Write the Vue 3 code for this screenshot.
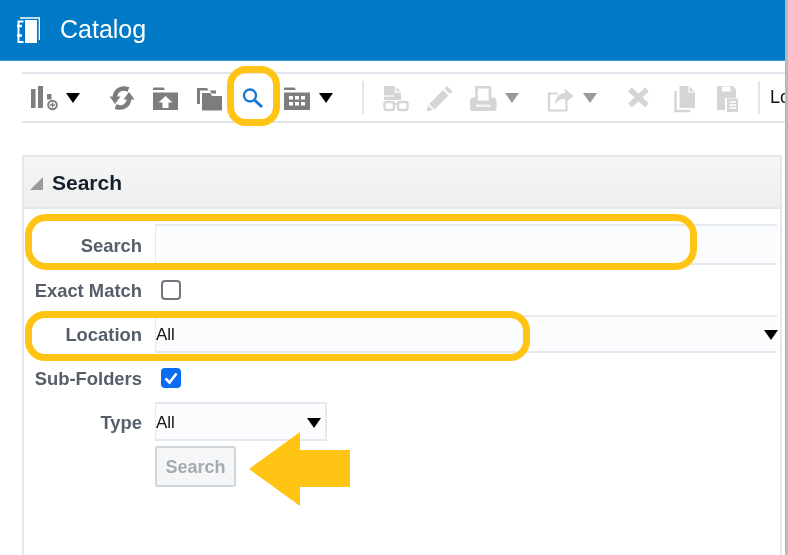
<script setup>
const tools = [
  { id: 'bars', x: 43, w: 30 }, { id: 'caret', x: 72.5, w: 14 },
  { id: 'refresh', x: 122, w: 30 }, { id: 'folderUp', x: 165, w: 30 },
  { id: 'folders', x: 209, w: 30 }, { id: 'search', x: 252, w: 30 },
  { id: 'folderGrid', x: 297, w: 30 }, { id: 'caret', x: 326, w: 14 },
  { id: 'sep', x: 363, w: 2 }, { id: 'docGlasses', x: 396, w: 30, off: true },
  { id: 'pencil', x: 440, w: 30, off: true }, { id: 'printer', x: 483, w: 30, off: true },
  { id: 'caret', x: 512, w: 14, off: true }, { id: 'share', x: 561, w: 30, off: true },
  { id: 'caret', x: 590, w: 14, off: true }, { id: 'close', x: 638, w: 30, off: true },
  { id: 'copy', x: 684, w: 30, off: true }, { id: 'paste', x: 727, w: 30, off: true },
  { id: 'sep', x: 759, w: 2 }
]
const startX = 22
const placed = tools.map((tool, i) => {
  const prevEnd = i === 0 ? startX : tools[i - 1].x + tools[i - 1].w / 2
  return { ...tool, gap: tool.x - tool.w / 2 - prevEnd }
})
</script>

<template>
  <div class="page">
    <header class="topbar">
      <svg class="logo" viewBox="0 0 24 27" width="24" height="27">
        <path d="M4 1h19.500v22" fill="none" stroke="#fff" stroke-width="1.600" />
        <rect x="9" y="3" width="12" height="23" fill="#fff" />
        <path d="M7.500 4.500H2.500V25H7.500" fill="none" stroke="#fff" stroke-width="2" />
        <path d="M1 9h5M1 18.500h5" stroke="#fff" stroke-width="2.400" />
      </svg>
      <span class="title">Catalog</span>
    </header>

    <div class="toolbar">
      <template v-for="(t, i) in placed" :key="i">
        <span v-if="t.id === 'sep'" class="sep" :style="{ marginLeft: t.gap + 'px' }"></span>
        <span v-else-if="t.id === 'caret'" class="caret" :class="{ off: t.off }" :style="{ marginLeft: t.gap + 'px' }"></span>
        <svg v-else class="tool" :class="{ off: t.off }" viewBox="0 0 30 30" width="30" height="30" :style="{ marginLeft: t.gap + 'px' }">
          <g v-if="t.id === 'bars'" fill="currentColor">
            <rect x="3" y="6" width="4.500" height="19" /><rect x="10" y="3" width="5" height="22" />
            <rect x="19" y="11" width="4.500" height="5.500" />
            <circle cx="24.500" cy="22" r="4.300" fill="#fff" stroke="currentColor" stroke-width="2" />
            <path d="M24.500 19.500v5M22 22h5" stroke="currentColor" stroke-width="1.500" />
          </g>
          <g v-else-if="t.id === 'refresh'" fill="none" stroke="currentColor" stroke-width="4.600">
            <path d="M8 14.500C8 8 14 3.500 21.500 6.500" />
            <path d="M22 15.500C22 22 16 26.500 8.500 23.500" />
            <path d="M2.500 13.500h11L8 21z" fill="currentColor" stroke="none" />
            <path d="M16.500 16.500h11L22 9z" fill="currentColor" stroke="none" />
          </g>
          <g v-else-if="t.id === 'folderUp'">
            <path d="M3 5.500q0-1 1-1h9.500l1.500 2.500H3zM3 9.500h25V27H3z" fill="currentColor" />
            <path d="M15.500 13l7 6.500h-4V25h-6v-5.500h-4z" fill="#fff" />
          </g>
          <g v-else-if="t.id === 'folders'" fill="currentColor">
            <path d="M3 5h10l1.500 2.500H6V21H3z" />
            <path d="M8 10h8.500l1.500 3h10v14.500H8z" />
            <path d="M15.500 7.500h6.500V10.500h-4z" />
          </g>
          <g v-else-if="t.id === 'search'" fill="none" stroke="#1379d2">
            <circle cx="13" cy="12.500" r="6" stroke-width="2.300" />
            <path d="M17.500 17l7.500 7" stroke-width="3" />
          </g>
          <g v-else-if="t.id === 'folderGrid'">
            <path d="M2 5.500q0-1 1-1h9.500l1.500 2.500H2zM2 9.500h26V27H2z" fill="currentColor" />
            <path d="M7 13h4v3.500H7zM13 13h4v3.500h-4zM19 13h4v3.500h-4zM7 19h4v3.500H7zM13 19h4v3.500h-4zM19 19h4v3.500h-4z" fill="#fff" />
          </g>
          <g v-else-if="t.id === 'docGlasses'">
            <path d="M3 3h11l6 6v8H3z" fill="currentColor" />
            <path d="M14.500 3v6h6" fill="none" stroke="#fff" stroke-width="1.300" />
            <path d="M3 13h10" stroke="#fff" stroke-width="1.200" />
            <rect x="3.500" y="19" width="9.500" height="8" rx="2" fill="#fff" stroke="currentColor" stroke-width="2.400" />
            <rect x="17" y="19" width="9.500" height="8" rx="2" fill="#fff" stroke="currentColor" stroke-width="2.400" />
            <path d="M13 21h4" stroke="currentColor" stroke-width="2" />
          </g>
          <g v-else-if="t.id === 'pencil'" fill="currentColor">
            <path d="M22 3l5.500 5.500-2.500 2.500-5.500-5.500zM18 7l5.500 5.500L9.500 26.500 4 21zM3.200 22.500l4.500 4.500-6 1.500z" />
          </g>
          <g v-else-if="t.id === 'printer'" fill="currentColor">
            <path d="M8.500 18V4.300h13.500V18" fill="none" stroke="currentColor" stroke-width="2.600" />
            <path d="M5 14.500h3.500v3h13.500v-3h3.500q3 0 3 3V26q0 2-2 2H4q-2 0-2-2v-8.500q0-3 3-3z" />
            <path d="M8 21.500h14.500v2.500H8z" fill="#fff" opacity=".7" />
          </g>
          <g v-else-if="t.id === 'share'">
            <path d="M12 10.500H3V27.500H20.500V19" fill="none" stroke="currentColor" stroke-width="2.200" />
            <path d="M19 6l8.500 7-8.500 7v-4c-5 0-8 2-10 6 0-7 4-12 10-12z" fill="currentColor" />
          </g>
          <path v-else-if="t.id === 'close'" d="M7 6.500L24 22.500M24 6.500L7 22.500" fill="none" stroke="currentColor" stroke-width="5.500" />
          <g v-else-if="t.id === 'copy'" fill="currentColor">
            <path d="M10.500 3h9.500l6 6v16H10.500z" />
            <path d="M6.500 8v20h15" fill="none" stroke="currentColor" stroke-width="2.400" />
            <path d="M20 3v6h6" fill="none" stroke="#fff" stroke-width="1.200" />
          </g>
          <g v-else-if="t.id === 'paste'">
            <path d="M5 3h16l3 3v9H13V27H5z" fill="currentColor" />
            <path d="M10 3.500h8.500v5H10z" fill="#fff" />
            <path d="M15 15.500h11V29H15z" fill="currentColor" />
            <path d="M17.500 19h6.500M17.500 22h6.500M17.500 25h6.500" stroke="#fff" stroke-width="1.300" />
          </g>
        </svg>
      </template>
      <span class="clip">Lo</span>
    </div>

    <section class="panel">
      <div class="panel-head">
        <span class="disclosure"></span>
        <h2>Search</h2>
      </div>
      <div class="form">
        <div class="row r-search">
          <label>Search</label>
          <div class="field"></div>
        </div>
        <div class="row r-exact">
          <label>Exact Match</label>
          <span class="check"></span>
        </div>
        <div class="row r-location">
          <label>Location</label>
          <div class="field select">All<span class="caret"></span></div>
        </div>
        <div class="row r-sub">
          <label>Sub-Folders</label>
          <span class="check on">
            <svg viewBox="0 0 20 20" width="20" height="20"><path d="M4.500 10.500l4 4 7-9" fill="none" stroke="#fff" stroke-width="2.600" /></svg>
          </span>
        </div>
        <div class="row r-type">
          <label>Type</label>
          <div class="field select narrow">All<span class="caret"></span></div>
        </div>
        <div class="row r-btn">
          <button type="button" disabled>Search</button>
        </div>
      </div>
    </section>

    <span class="ring ring-tool"></span>
    <span class="ring ring-search"></span>
    <span class="ring ring-location"></span>
    <svg class="arrow" viewBox="0 0 102 75" width="102" height="75">
      <path d="M0 37 51 0V18H101V55H51V74Z" fill="#ffc414" />
    </svg>
  </div>
</template>

<style>
html, body { margin: 0; background: #fff; }
</style>

<style scoped>
.page {
  position: relative;
  box-sizing: border-box;
  width: 788px;
  height: 555px;
  overflow: hidden;
  background: #fff;
  border-right: 3px solid #b9b9b9;
  font-family: "Liberation Sans", Arial, sans-serif;
  filter: blur(0.4px);
}
.topbar {
  box-sizing: border-box;
  height: 61px;
  display: flex;
  align-items: center;
  padding-left: 16px;
  background: #007ac7;
  border-bottom: 1px solid #3d9cdc;
  color: #fff;
}
.logo { flex: none; margin-top: 1px; }
.title { margin-left: 20px; font-size: 25px; line-height: 1; margin-top: -2px; }
.toolbar {
  box-sizing: border-box;
  height: 51px;
  margin: 11px 0 0 22px;
  display: flex;
  align-items: center;
  border-top: 2px solid #e0e6ec;
  border-bottom: 2px solid #e0e6ec;
  overflow: hidden;
}
.tool { flex: none; color: #7d7d7d; }
.tool.off { color: #d5d5d5; }
.caret {
  flex: none;
  width: 0;
  height: 0;
  border-left: 7px solid transparent;
  border-right: 7px solid transparent;
  border-top: 10px solid #000;
}
.caret.off { border-top-color: #9a9a9a; }
.sep { flex: none; width: 2px; height: 33px; background: #e0e6ec; }
.clip { margin-left: 10px; font-size: 18px; color: #111; white-space: nowrap; }
.panel {
  box-sizing: border-box;
  height: 400px;
  margin: 32px 3px 0 22px;
  border: 2px solid #e2e7ea;
  border-bottom: 0;
  border-radius: 2px 2px 0 0;
}
.panel-head {
  box-sizing: border-box;
  height: 52px;
  display: flex;
  align-items: center;
  padding-left: 6px;
  background: linear-gradient(#f6f6f6, #eeeeee);
  border-bottom: 2px solid #e0e6ea;
}
.disclosure {
  width: 0;
  height: 0;
  margin-top: 2px;
  border-left: 13px solid transparent;
  border-bottom: 13px solid #9b9b9b;
}
h2 { margin: 2px 0 0 9px; font-size: 21px; font-weight: 700; color: #15202b; }
.form { padding: 15px 3px 0 0; }
.row { display: flex; align-items: center; }
label {
  flex: none;
  box-sizing: border-box;
  width: 118px;
  margin-right: 13px;
  padding-top: 2px;
  text-align: right;
  font-size: 18.4px;
  font-weight: 700;
  color: #555e69;
}
.field {
  flex: 1;
  box-sizing: border-box;
  align-self: stretch;
  display: flex;
  align-items: center;
  padding-top: 2px;
  background: #fbfcfe;
  border: 2px solid #e6eaee;
  border-left-width: 1px;
  border-right: 0;
  font-size: 17px;
  color: #111;
}
.select { justify-content: space-between; }
.select .caret { margin-right: -1px; }
.narrow { flex: none; width: 172px; border-right: 2px solid #e6eaee; }
.narrow .caret { margin-right: 4px; }
.r-search { height: 41px; }
.r-exact { height: 50px; }
.r-location { height: 38px; }
.r-sub { height: 49px; }
.r-type { height: 39px; }
.r-btn { margin-top: 5px; padding-left: 131px; }
.check {
  box-sizing: border-box;
  flex: none;
  width: 20px;
  height: 20px;
  margin-left: 6px;
  border: 2px solid #73787e;
  border-radius: 4px;
  background: #fff;
}
.check.on {
  display: block;
  border: 0;
  background: #0a6cf0;
}
.check.on svg { display: block; }
button {
  box-sizing: border-box;
  width: 81px;
  height: 41px;
  padding: 2px 0 0;
  background: #f5f6f8;
  border: 2px solid #cfd6dc;
  border-radius: 3px;
  font: 700 18px "Liberation Sans", Arial, sans-serif;
  color: #a6abb1;
}
.ring {
  position: absolute;
  box-sizing: border-box;
  border: 7px solid #ffc414;
  pointer-events: none;
}
.ring-tool { left: 227px; top: 66px; width: 53px; height: 60px; border-radius: 19px; }
.ring-search { left: 25px; top: 214px; width: 672px; height: 56px; border-radius: 21px; }
.ring-location { left: 25px; top: 311px; width: 505px; height: 50px; border-radius: 20px; }
.arrow { position: absolute; left: 249px; top: 432px; }
</style>
